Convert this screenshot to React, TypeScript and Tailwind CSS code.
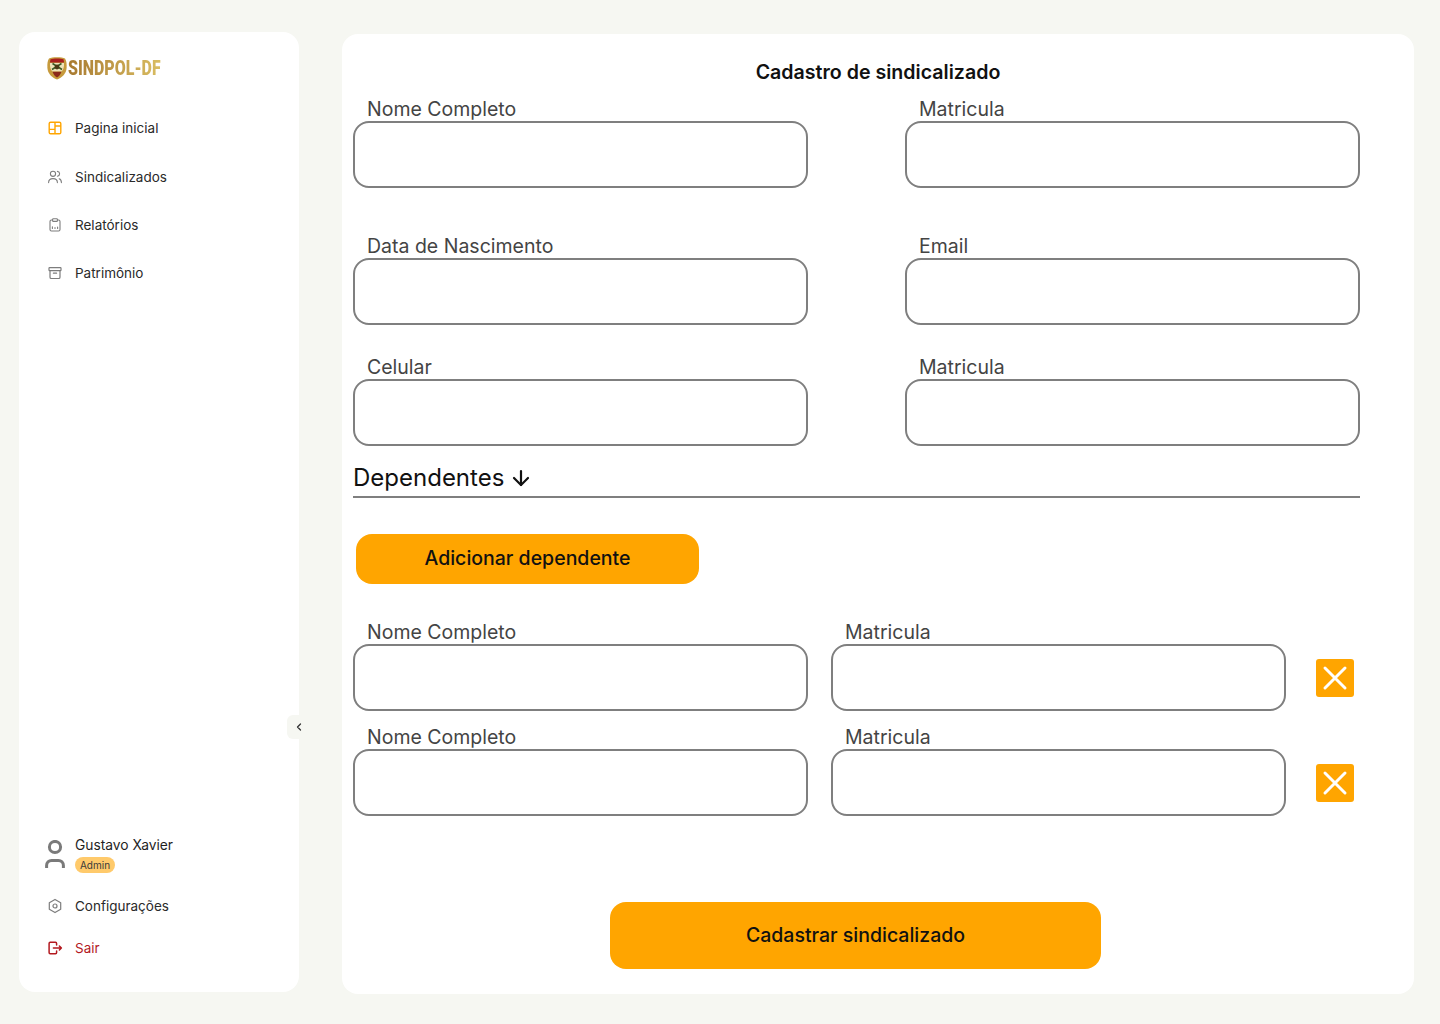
import { ArrowDown, ChevronLeft } from "lucide-react";
import type { ReactNode } from "react";

const HomeIcon = () => (
  <svg width="16" height="16" viewBox="0 0 16 16" fill="none" stroke="#ffa500" strokeWidth="1.4" strokeLinejoin="round">
    <rect x="2.200" y="2.200" width="11.600" height="11.600" rx="1.400" />
    <path d="M8 2.200v11.600M2.200 9.400H8M8 6h5.800" />
  </svg>
);

const UsersIcon = () => (
  <svg width="16" height="16" viewBox="0 0 16 16" fill="none" stroke="#7d7d7d" strokeWidth="1.1" strokeLinecap="round">
    <circle cx="6" cy="4.800" r="2.600" />
    <path d="M1.600 13.600c0-2.600 1.900-4 4.400-4s4.400 1.400 4.400 4" />
    <path d="M10.400 2.400c1.300.2 2.200 1.200 2.200 2.400s-.9 2.200-2.200 2.400M12.200 9.800c1.400.5 2.200 1.900 2.200 3.800" />
  </svg>
);

const ClipboardIcon = () => (
  <svg width="16" height="16" viewBox="0 0 16 16" fill="none" stroke="#7d7d7d" strokeWidth="1.1" strokeLinecap="round" strokeLinejoin="round">
    <path d="M5.600 3H4.400C3.600 3 3 3.600 3 4.400v8.200c0 .8.600 1.400 1.400 1.400h7.200c.8 0 1.400-.6 1.400-1.400V4.400C13 3.600 12.400 3 11.600 3h-1.200" />
    <rect x="5.600" y="1.800" width="4.800" height="2.600" rx=".7" />
    <path d="M5.400 11.400V9.800M8 11.400v-.8M10.600 11.400V10" />
  </svg>
);

const ArchiveIcon = () => (
  <svg width="16" height="16" viewBox="0 0 16 16" fill="none" stroke="#7d7d7d" strokeWidth="1.2" strokeLinecap="round" strokeLinejoin="round">
    <rect x="2" y="2.600" width="12" height="3" rx=".6" />
    <path d="M3 5.600v6.600c0 .7.600 1.300 1.300 1.300h7.400c.7 0 1.300-.6 1.300-1.300V5.600M6.400 8.200h3.200" />
  </svg>
);

const GearIcon = () => (
  <svg width="16" height="16" viewBox="0 0 16 16" fill="none" stroke="#7d7d7d" strokeWidth="1.2" strokeLinejoin="round">
    <path d="M8 1.400l5.700 3.300v6.600L8 14.600l-5.700-3.300V4.700z" />
    <circle cx="8" cy="8" r="2" />
  </svg>
);

const LogoutIcon = () => (
  <svg width="16" height="16" viewBox="0 0 16 16" fill="none" stroke="#b3191f" strokeWidth="1.5" strokeLinecap="round" strokeLinejoin="round">
    <path d="M9.600 5V3.400c0-.6-.5-1.100-1.100-1.100H3.200c-.6 0-1.100.5-1.100 1.100v9.200c0 .6.500 1.100 1.100 1.100h5.300c.6 0 1.100-.5 1.100-1.100V11" />
    <path d="M6.400 8h8M12.400 6l2 2-2 2" />
  </svg>
);

const UserIcon = () => (
  <svg width="20" height="30" viewBox="0 0 20 30" fill="none" stroke="#7a7a7a" strokeWidth="3">
    <circle cx="10" cy="7" r="5.600" />
    <path d="M1.600 28v-2.400c0-3.200 2.200-5.200 5-5.200h6.800c2.800 0 5 2 5 5.200V28" />
  </svg>
);

const Shield = () => (
  <svg width="20" height="24" viewBox="0 0 20 24">
    <path d="M2 2.500C5 .8 15 .8 18 2.500c1.600 3 1.800 5 1.600 9.500-.3 5.500-4.600 9.800-9.600 11.500C5 21.800.7 17.500.4 12 .2 7.500.4 5.500 2 2.500z" fill="#c69a3c" />
    <path d="M3.500 3.200c3-1 10-1 13 0l.6 3.200H2.900z" fill="#a81e1e" />
    <path d="M3 7h14c.3 4-.6 6.600-2.400 8.400H5.400C3.600 13.600 2.700 11 3 7z" fill="#efe3b8" />
    <path d="M5 13.500L14.500 7.500M15 13.500L5.500 7.500" stroke="#3c5a24" strokeWidth="1.500" />
    <circle cx="10" cy="11" r="2.400" fill="#4a3a14" />
    <path d="M5.500 15.800h9c-.9 2.700-2.500 4.500-4.500 5.700-2-1.200-3.600-3-4.500-5.700z" fill="#8b2a1c" />
  </svg>
);

const CloseIcon = () => (
  <svg width="38" height="38" viewBox="0 0 38 38" fill="none" stroke="#ffffff" strokeWidth="3" strokeLinecap="round">
    <path d="M9 9l20 20M29 9L9 29" />
  </svg>
);

const NavItem = ({ icon, label }: { icon: ReactNode; label: string }) => (
  <div className="flex h-[24px] items-center gap-[12px]">
    {icon}
    <span className="text-[13.5px] text-[#2a2a2a]">{label}</span>
  </div>
);

const Field = ({ label, className }: { label: string; className?: string }) => (
  <div className={className}>
    <label className="block h-[24px] pl-[14px] text-[19.5px] leading-[24px] text-[#444444]">{label}</label>
    <input className="block h-[67px] w-full rounded-[16px] border-2 border-[#7f7f7f] bg-white outline-none" />
  </div>
);

const DependentRow = ({ className }: { className?: string }) => (
  <div className={`flex items-center ${className ?? ""}`}>
    <Field label="Nome Completo" className="w-[455px]" />
    <Field label="Matricula" className="ml-[23px] w-[455px]" />
    <button className="ml-[30px] mt-[24px] flex h-[38px] w-[38px] items-center justify-center rounded-[3px] bg-[#ffa500]">
      <CloseIcon />
    </button>
  </div>
);

export default function App() {
  return (
    <div className="flex min-h-[1024px] items-start bg-[#f6f7f2] pl-[19px] pt-[32px] font-['Inter',sans-serif]">
      <aside className="relative flex h-[960px] w-[280px] shrink-0 flex-col justify-between rounded-[16px] bg-white pb-[32px] pl-[28px] pt-[24px]">
        <div>
          <div className="flex h-[24px] items-center gap-[1px]">
            <Shield />
            <span className="origin-left scale-x-[0.76] bg-gradient-to-r from-[#a87a30] to-[#d9bd62] bg-clip-text font-['Roboto',sans-serif] text-[21px] font-black leading-[24px] text-transparent">
              SINDPOL-DF
            </span>
          </div>
          <nav className="mt-[36.400px] flex flex-col gap-[24.300px]">
            <NavItem icon={<HomeIcon />} label="Pagina inicial" />
            <NavItem icon={<UsersIcon />} label="Sindicalizados" />
            <NavItem icon={<ClipboardIcon />} label="Relatórios" />
            <NavItem icon={<ArchiveIcon />} label="Patrimônio" />
          </nav>
        </div>
        <div>
          <div className="flex items-center gap-[10px]">
            <div className="-ml-[2px]">
              <UserIcon />
            </div>
            <div>
              <p className="text-[13.800px] leading-[18px] text-[#1f1f1f]">Gustavo Xavier</p>
              <span className="mt-[3px] block w-[40px] rounded-full bg-[#ffca6b] text-center text-[10px] leading-[16px] text-[#3a3a3a]">
                Admin
              </span>
            </div>
          </div>
          <div className="mt-[21px] flex h-[24px] items-center gap-[12px]">
            <GearIcon />
            <span className="text-[13.5px] text-[#2a2a2a]">Configurações</span>
          </div>
          <div className="mt-[18px] flex h-[24px] items-center gap-[12px]">
            <LogoutIcon />
            <span className="text-[13.5px] text-[#b3191f]">Sair</span>
          </div>
        </div>
        <button className="absolute right-[-12px] top-[683px] flex h-[24px] w-[24px] items-center justify-center rounded-[6px] bg-[#f6f7f2]">
          <ChevronLeft size={12} color="#333333" strokeWidth={2.5} />
        </button>
      </aside>
      <main className="ml-[43px] mt-[2px] h-[960px] w-[1072px] rounded-[16px] bg-white pl-[11px] pt-[24px]">
        <h1 className="ml-[-11px] text-center text-[19.6px] font-semibold leading-[28px] text-[#111111]">
          Cadastro de sindicalizado
        </h1>
        <div className="mt-[11px] grid w-[1007px] grid-cols-[455px_455px] justify-between">
          <Field label="Nome Completo" />
          <Field label="Matricula" />
          <Field label="Data de Nascimento" className="mt-[46px]" />
          <Field label="Email" className="mt-[46px]" />
          <Field label="Celular" className="mt-[30px]" />
          <Field label="Matricula" className="mt-[30px]" />
        </div>
        <div className="mt-[16px] flex h-[36px] w-[1007px] items-start gap-[5px] border-b-2 border-[#7f7f7f]">
          <span className="text-[24px] leading-[32px] text-[#111111]">Dependentes</span>
          <ArrowDown size={24} color="#111111" strokeWidth={2.200} className="mt-[4px]" />
        </div>
        <button className="ml-[3px] mt-[36px] h-[50px] w-[343px] rounded-[16px] bg-[#ffa500] text-[19.5px] font-[450] text-[#111111]">
          Adicionar dependente
        </button>
        <DependentRow className="mt-[36px]" />
        <DependentRow className="mt-[14px]" />
        <button className="ml-[257px] mt-[86px] block h-[67px] w-[491px] rounded-[16px] bg-[#ffa500] text-[19.5px] font-[450] text-[#111111]">
          Cadastrar sindicalizado
        </button>
      </main>
    </div>
  );
}
